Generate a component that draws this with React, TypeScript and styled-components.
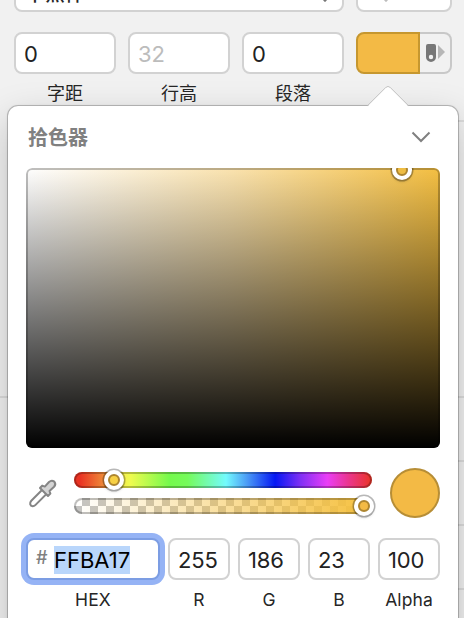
import React from "react";
import styled, { createGlobalStyle } from "styled-components";

const GlobalStyle = createGlobalStyle`
  * { box-sizing: border-box; }
  html, body { margin: 0; padding: 0; overflow: hidden; }
  body {
    font-family: Inter, "Noto Sans CJK SC", sans-serif;
    color: #262626;
    background: #f1f1f1;
  }
`;

const Window = styled.main`
  position: relative;
  width: 464px;
  height: 618px;
  overflow: hidden;
  background: #f1f1f1;
`;

const Inspector = styled.section`
  display: flex;
  flex-direction: column;
`;

const Controls = styled.div`
  height: 120px;
`;

const Divider = styled.div<{ $indent?: number; $gap: number }>`
  flex: none;
  height: 2px;
  margin: 0 0 ${(p) => p.$gap}px ${(p) => p.$indent ?? 0}px;
  background: #dcdcdc;
`;

const FontRow = styled.div`
  display: flex;
  align-items: flex-end;
  gap: 12px;
  height: 12px;
  padding-left: 14px;
`;

const FontBox = styled.div<{ $width: number }>`
  display: flex;
  flex: none;
  justify-content: space-between;
  width: ${(p) => p.$width}px;
  height: 42px;
  padding: 2px 11px 0 9px;
  border: 2px solid #d2d2d2;
  border-radius: 8px;
  background: #fff;
  font-size: 20px;
  font-weight: 500;
  line-height: 41px;
`;

const Chevron = styled.svg<{ $left?: number }>`
  display: block;
  margin: 20px 0 0 ${(p) => p.$left ?? 0}px;
`;

const SpacingRow = styled.div`
  display: grid;
  grid-template-columns: repeat(3, 102px) 96px;
  column-gap: 12px;
  padding: 20px 0 0 14px;
`;

const Field = styled.label`
  display: flex;
  flex-direction: column;
  align-items: center;
`;

const Value = styled.div`
  width: 100%;
  height: 42px;
  padding: 1px 0 0 8px;
  border: 2px solid #d2d2d2;
  border-radius: 8px;
  background: #fff;
  color: #222;
  font-size: 22px;
  line-height: 39px;
  letter-spacing: -0.2px;
  white-space: nowrap;
`;

const MutedValue = styled(Value)`
  color: #bcbcbc;
`;

const Caption = styled.span`
  margin-top: 7px;
  font-size: 18px;
  line-height: 26px;
`;

const SwatchButton = styled.div`
  display: flex;
  height: 42px;
`;

const SwatchColor = styled.div`
  width: 64px;
  border: 2px solid #c6972f;
  border-radius: 8px 0 0 8px;
  background: #f3ba45;
`;

const SwatchMenu = styled.div`
  display: flex;
  flex: 1;
  align-items: center;
  padding-left: 5px;
  border: 2px solid #c8c8c8;
  border-left: 0;
  border-radius: 0 8px 8px 0;
`;

const Popover = styled.section`
  position: absolute;
  top: 106px;
  left: 8px;
  width: 450px;
  height: 560px;
  padding: 0 18px;
  border-radius: 10px;
  background: #fff;
  box-shadow: 0 0 0 1px rgba(0, 0, 0, 0.2), 0 0 3px rgba(0, 0, 0, 0.12), 0 14px 38px rgba(0, 0, 0, 0.22);
`;

const Arrow = styled.svg`
  position: absolute;
  top: -21px;
  left: 359px;
  display: block;
`;

const Header = styled.header`
  display: flex;
  align-items: center;
  justify-content: space-between;
  height: 62px;
  padding: 0 9px 0 2px;
`;

const Title = styled.h1`
  margin: 2px 0 0;
  color: #808080;
  font-size: 20px;
  font-weight: 700;
  line-height: 30px;
`;

const ShadeArea = styled.div`
  position: relative;
  height: 280px;
  border-radius: 6px;
  overflow: hidden;
  background: linear-gradient(to bottom, transparent, #000), linear-gradient(to right, #fff, #fbe3ae 50%, #f4bf42);
  &::after {
    content: "";
    position: absolute;
    inset: 0;
    border-radius: 6px;
    box-shadow: inset 0 0 0 2px rgba(0, 0, 0, 0.25);
  }
`;

const Knob = styled.span<{ $x: number; $y: number; $fill: string }>`
  position: absolute;
  z-index: 1;
  left: ${(p) => p.$x}px;
  top: ${(p) => p.$y}px;
  width: 20px;
  height: 20px;
  border: 5px solid #fff;
  border-radius: 50%;
  background: ${(p) => p.$fill};
  background-clip: padding-box;
  box-shadow: 0 0 0 1.5px rgba(0, 0, 0, 0.28), 0 2px 3px rgba(0, 0, 0, 0.15);
  &::after {
    content: "";
    position: absolute;
    inset: -1px;
    border: 2px solid #ad8530;
    border-radius: 50%;
  }
`;

const Sliders = styled.div`
  display: flex;
  align-items: center;
  height: 50px;
  margin-top: 20px;
`;

const Dropper = styled.svg`
  flex: none;
  display: block;
  width: 32px;
  height: 32px;
  margin-right: 16px;
`;

const Tracks = styled.div`
  display: flex;
  flex-direction: column;
  width: 298px;
  gap: 10px;
`;

const Track = styled.div`
  position: relative;
  height: 16px;
  border-radius: 8px;
  &::before {
    content: "";
    position: absolute;
    inset: 0;
    border-radius: 8px;
    box-shadow: inset 0 0 0 2px rgba(0, 0, 0, 0.25);
  }
`;

const HueTrack = styled(Track)`
  background: linear-gradient(to right, #ea3323 2%, #ef8a38 10%, #f8e84b 15%, #eefb4f 19%, #75fa4c 32%, #75fb5a 38%, #73fbfd 51%, #4b9cf6 58%, #0518f4 67.5%, #8030f5 76%, #ea3df7 85%, #eb3590 92%, #ea3323 100%);
`;

const AlphaTrack = styled(Track)`
  background:
    linear-gradient(to right, rgba(245, 192, 62, 0), rgba(245, 192, 62, 1)),
    repeating-conic-gradient(#c4c4c4 0 25%, #fff 0 50%) 0 0 / 16px 16px;
`;

const Preview = styled.div`
  width: 50px;
  height: 50px;
  margin-left: 18px;
  border: 2px solid #b78e36;
  border-radius: 50%;
  background: #f3ba45;
`;

const Channels = styled.div`
  display: grid;
  grid-template-columns: 134px repeat(4, 62px);
  column-gap: 8px;
  margin-top: 20px;
`;

const HexValue = styled(Value)`
  display: flex;
  align-items: center;
  border-color: #7c9de3;
  box-shadow: 0 0 0 5px #95b3f5;
  color: #000;
`;

const Hash = styled.span`
  width: 18px;
  color: #808080;
  font-size: 18px;
  font-weight: 500;
  line-height: 26px;
  transform: translateY(-2px);
`;

const Selected = styled.span`
  height: 28px;
  background: #b9d6fb;
  line-height: 28px;
  letter-spacing: 0;
`;

const ChannelCaption = styled(Caption)`
  font-size: 17.5px;
  letter-spacing: 0.1px;
`;

const channels = [
  ["255", "R"],
  ["186", "G"],
  ["23", "B"],
  ["100", "Alpha"],
];

export default function App() {
  return (
    <>
      <GlobalStyle />
      <Window>
        <Inspector>
          <Controls>
            <FontRow>
              <FontBox $width={330}>
                <span>中黑体</span>
                <Chevron width="12" height="8" viewBox="0 0 12 8">
                  <path d="M1 1.5 L6 6.7 L11 1.5" fill="none" stroke="#777" strokeWidth="2" />
                </Chevron>
              </FontBox>
              <FontBox $width={96}>
                <Chevron $left={13} width="12" height="8" viewBox="0 0 12 8">
                  <path d="M1 1.5 L6 6.7 L11 1.5" fill="none" stroke="#bcbcbc" strokeWidth="2" />
                </Chevron>
              </FontBox>
            </FontRow>
            <SpacingRow>
              <Field>
                <Value>0</Value>
                <Caption>字距</Caption>
              </Field>
              <Field>
                <MutedValue>32</MutedValue>
                <Caption>行高</Caption>
              </Field>
              <Field>
                <Value>0</Value>
                <Caption>段落</Caption>
              </Field>
              <SwatchButton>
                <SwatchColor />
                <SwatchMenu>
                  <svg width="21" height="20" viewBox="0 0 21 20">
                    <path
                      fillRule="evenodd"
                      d="M3 1 H9 Q11 1 11 3 V14 A5 5 0 0 1 1 14 V3 Q1 1 3 1Z M6 11.8 A2.2 2.2 0 1 0 6 16.2 A2.2 2.2 0 1 0 6 11.8Z"
                      fill="#777"
                    />
                    <path d="M13 2 L20 9 L13 16Z" fill="#b6b6b6" />
                  </svg>
                </SwatchMenu>
              </SwatchButton>
            </SpacingRow>
          </Controls>
          <Divider $indent={240} $gap={274} />
          <Divider $gap={62} />
          <Divider $indent={240} $gap={62} />
          <Divider $indent={240} $gap={62} />
          <Divider $indent={240} $gap={0} />
        </Inspector>
        <Popover>
          <Arrow width="42" height="22" viewBox="0 0 42 22">
            <path d="M0 22 L18.6 3 Q21 .5 23.4 3 L42 22Z" fill="#fff" />
            <path d="M.6 20.5 L18.6 2.6 Q21 .2 23.4 2.6 L41.4 20.5" fill="none" stroke="#c3c3c3" />
          </Arrow>
          <Header>
            <Title>拾色器</Title>
            <svg width="20" height="12" viewBox="0 0 20 12">
              <path d="M1.5 1.5 L10 10 L18.5 1.5" fill="none" stroke="#808080" strokeWidth="2" />
            </svg>
          </Header>
          <ShadeArea>
            <Knob $x={366} $y={-8} $fill="#efbd43" />
          </ShadeArea>
          <Sliders>
            <Dropper viewBox="0 0 32 32">
              <path
                d="M16.5 12.5 L5.3 23.7 Q3.9 25.2 4.2 27.3 Q4.7 29.3 6.8 29.2 Q8.2 29.2 9.3 28.1 L20.5 17Z"
                fill="#fff"
                stroke="#858585"
                strokeWidth="2"
              />
              <path
                d="M14 11 L16.2 8.6 L18.8 9.6 L23 5 Q25.6 2.6 28.3 4.6 Q30.4 7.4 28.1 9.8 L23.5 14 L24.4 16.6 L22 19Z"
                fill="#d4d4d4"
                stroke="#858585"
                strokeWidth="2"
                strokeLinejoin="round"
              />
            </Dropper>
            <Tracks>
              <HueTrack>
                <Knob $x={30} $y={-2} $fill="#f7d044" />
              </HueTrack>
              <AlphaTrack>
                <Knob $x={280} $y={-2} $fill="#f3ba45" />
              </AlphaTrack>
            </Tracks>
            <Preview />
          </Sliders>
          <Channels>
            <Field>
              <HexValue>
                <Hash>#</Hash>
                <Selected>FFBA17</Selected>
              </HexValue>
              <ChannelCaption>HEX</ChannelCaption>
            </Field>
            {channels.map(([value, name]) => (
              <Field key={name}>
                <Value>{value}</Value>
                <ChannelCaption>{name}</ChannelCaption>
              </Field>
            ))}
          </Channels>
        </Popover>
      </Window>
    </>
  );
}
